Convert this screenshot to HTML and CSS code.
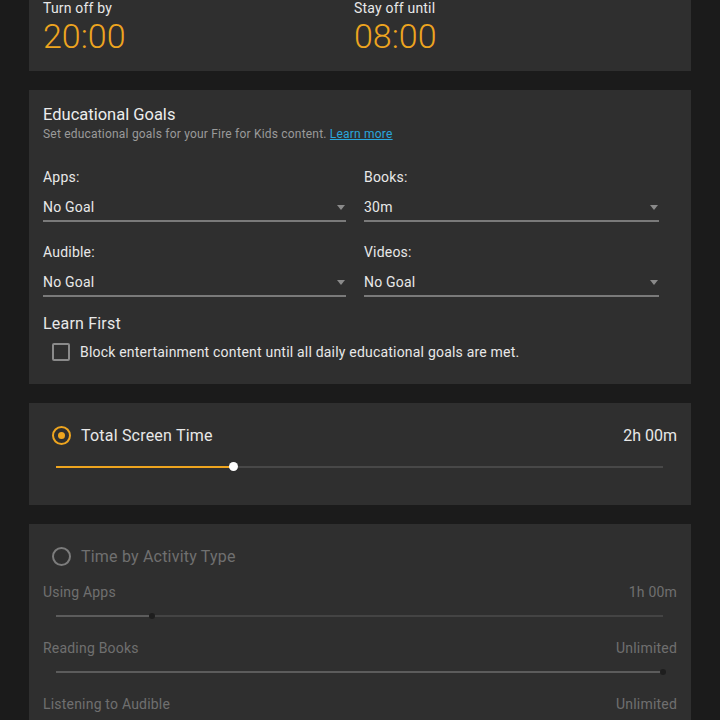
FILE: index.html
```html
<!DOCTYPE html>
<html>
<head>
    <meta charset="utf-8">
    <title>Parental Controls</title>
    <link rel="stylesheet" href="styles.css">
</head>
<body>
<div class="page">
    <div class="card card-hours">
        <div class="hours">
            <div class="hour">
                <div class="hour-label">Turn off by</div>
                <div class="hour-value">20:00</div>
            </div>
            <div class="hour">
                <div class="hour-label">Stay off until</div>
                <div class="hour-value">08:00</div>
            </div>
        </div>
    </div>

    <div class="card card-goals">
        <h2 class="card-title">Educational Goals</h2>
        <p class="card-sub">Set educational goals for your Fire for Kids content. <a href="#">Learn more</a></p>
        <div class="goals">
            <div class="goal">
                <div class="goal-label">Apps:</div>
                <div class="select">No Goal<span class="caret"></span></div>
            </div>
            <div class="goal">
                <div class="goal-label">Books:</div>
                <div class="select">30m<span class="caret"></span></div>
            </div>
            <div class="goal">
                <div class="goal-label">Audible:</div>
                <div class="select">No Goal<span class="caret"></span></div>
            </div>
            <div class="goal">
                <div class="goal-label">Videos:</div>
                <div class="select">No Goal<span class="caret"></span></div>
            </div>
        </div>
        <h3 class="learn-title">Learn First</h3>
        <label class="check">
            <span class="box"></span>
            Block entertainment content until all daily educational goals are met.
        </label>
    </div>

    <div class="card card-total">
        <div class="option">
            <span class="radio on"></span>
            <span class="option-name">Total Screen Time</span>
            <span class="option-value">2h 00m</span>
        </div>
        <div class="slider">
            <div class="track"><div class="fill" style="width: 29.2%"></div><span class="thumb"></span></div>
        </div>
    </div>

    <div class="card card-activity disabled">
        <div class="option">
            <span class="radio"></span>
            <span class="option-name">Time by Activity Type</span>
        </div>
        <div class="activity">
            <div class="activity-row"><span>Using Apps</span><span>1h 00m</span></div>
            <div class="slider">
                <div class="track"><div class="fill" style="width: 15.8%"></div><span class="thumb"></span></div>
            </div>
        </div>
        <div class="activity">
            <div class="activity-row"><span>Reading Books</span><span>Unlimited</span></div>
            <div class="slider">
                <div class="track"><div class="fill" style="width: 100%"></div><span class="thumb"></span></div>
            </div>
        </div>
        <div class="activity">
            <div class="activity-row"><span>Listening to Audible</span><span>Unlimited</span></div>
            <div class="slider">
                <div class="track"><div class="fill" style="width: 100%"></div><span class="thumb"></span></div>
            </div>
        </div>
    </div>
</div>
</body>
</html>
```

FILE: styles.css
```css
* {
    box-sizing: border-box;
    margin: 0;
    padding: 0;
}

body {
    background: #1b1b1b;
    color: #e8e8e8;
    font-family: Roboto, "Liberation Sans", sans-serif;
    font-size: 14px;
    letter-spacing: 0.2px;
    overflow: hidden;
}

.page {
    padding: 0 29px;
}

.card {
    background: #2f2f2f;
    padding: 0 14px;
    margin-bottom: 19px;
}

/* downtime hours */
.card-hours {
    padding-bottom: 15px;
}

.hours {
    display: grid;
    grid-template-columns: 311px 1fr;
}

.hour-label {
    line-height: 16px;
    font-size: 14px;
    color: #e8e8e8;
}

.hour-value {
    font-size: 34px;
    line-height: 40px;
    font-weight: 300;
    letter-spacing: 0;
    color: #eea51f;
}

/* educational goals */
.card-goals {
    padding-top: 14px;
    padding-bottom: 21px;
}

.card-title {
    font-size: 16.5px;
    line-height: 22px;
    font-weight: 400;
    letter-spacing: 0;
    color: #ececec;
}

.card-sub {
    font-size: 12px;
    line-height: 16px;
    color: #9a9a9a;
}

.card-sub a {
    color: #2aa6dc;
}

.goals {
    display: grid;
    grid-template-columns: 303px 295px;
    column-gap: 18px;
    row-gap: 20px;
    margin-top: 25px;
}

.goal-label {
    line-height: 20px;
}

.select {
    position: relative;
    margin-top: 10px;
    line-height: 20px;
    padding-bottom: 3px;
    border-bottom: 2px solid #7a7a7a;
}

.caret {
    position: absolute;
    right: 1px;
    top: 8px;
    border-left: 4.5px solid transparent;
    border-right: 4.5px solid transparent;
    border-top: 5px solid #8a8a8a;
}

.learn-title {
    margin-top: 16px;
    font-size: 16px;
    line-height: 22px;
    font-weight: 400;
}

.check {
    display: flex;
    align-items: center;
    gap: 10px;
    margin-top: 6px;
    padding-left: 9px;
    line-height: 22px;
}

.box {
    width: 18px;
    height: 18px;
    border: 2px solid #8a8a8a;
    border-radius: 2px;
}

/* screen time */
.card-total,
.card-activity {
    padding-top: 21px;
}

.card-total {
    padding-bottom: 33px;
}

.option {
    display: flex;
    align-items: center;
    padding-left: 9px;
    height: 22px;
    font-size: 16px;
}

.option-name {
    margin-left: 10px;
    flex: 1;
}

.option-value {
    font-size: 16px;
    letter-spacing: 0;
}

.radio {
    position: relative;
    width: 19px;
    height: 19px;
    border: 2px solid #8a8a8a;
    border-radius: 50%;
}

.radio.on {
    border-color: #eea51f;
}

.radio.on::after {
    content: "";
    position: absolute;
    left: 4px;
    top: 4px;
    width: 7px;
    height: 7px;
    border-radius: 50%;
    background: #eea51f;
}

.slider {
    margin-top: 16px;
    padding: 4px 14px 4px 13px;
}

.track {
    position: relative;
    height: 2px;
    background: #484848;
}

.fill {
    height: 2px;
    background: #eea51f;
}

.thumb {
    position: absolute;
    top: -4px;
    width: 9px;
    height: 9px;
    margin-left: -4px;
    border-radius: 50%;
    background: #fff;
}

.card-total .thumb {
    left: 29.2%;
}

/* disabled activity block */
.disabled .option {
    color: #707070;
}

.disabled .radio {
    border-color: #7c7c7c;
}

.activity {
    margin-top: 15px;
}

.activity + .activity {
    margin-top: 17px;
}

.activity-row {
    display: flex;
    justify-content: space-between;
    line-height: 20px;
    color: #6f6f6f;
}

.disabled .slider {
    margin-top: 9px;
}

.disabled .track {
    background: #444;
}

.disabled .fill {
    background: #5c5c5c;
}

.disabled .thumb {
    top: -2px;
    width: 6px;
    height: 6px;
    margin-left: -3px;
    background: #1e1e1e;
}

.activity:nth-child(2) .thumb {
    left: 15.8%;
}

.activity:nth-child(3) .thumb,
.activity:nth-child(4) .thumb {
    left: 100%;
}
```
